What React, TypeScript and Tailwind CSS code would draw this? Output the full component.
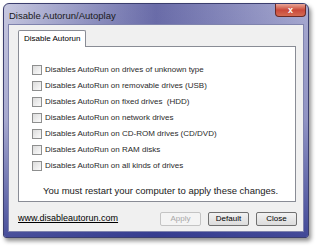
import React from 'react';

const options = [
  'Disables AutoRun on drives of unknown type',
  'Disables AutoRun on removable drives (USB)',
  'Disables AutoRun on fixed drives  (HDD)',
  'Disables AutoRun on network drives',
  'Disables AutoRun on CD-ROM drives (CD/DVD)',
  'Disables AutoRun on RAM disks',
  'Disables AutoRun on all kinds of drives',
];

function CheckBox() {
  return (
    <span className="w-[10px] h-[10px] border border-[#8e8f8f] bg-gradient-to-br from-[#dcdcdc] to-[#fbfbfb] shrink-0" />
  );
}

function Button({ label, disabled }: { label: string; disabled?: boolean }) {
  return (
    <div
      className={
        disabled
          ? 'w-[41px] h-[14px] rounded-[2px] border border-[#c4c4c4] bg-[#f4f4f4] text-[#a8a8a8] flex items-center justify-center text-[8px]'
          : 'w-[41px] h-[14px] rounded-[2px] border border-[#707070] bg-gradient-to-b from-[#f2f2f2] to-[#dcdcdc] text-black flex items-center justify-center text-[8px]'
      }
    >
      {label}
    </div>
  );
}

export default function App() {
  return (
    <div
      className="w-[320px] h-[246px] bg-white pt-[3px] pl-[3px] overflow-hidden"
      style={{ fontFamily: '"Liberation Sans", Arial, sans-serif' }}
    >
      <div className="w-[306px] h-[235px] rounded-t-[6px] rounded-b-[3px] border border-[#3b3e6e] bg-gradient-to-r from-[#c8c9e0] via-[#6a6ca8] to-[#a8aad0] shadow-[2px_3px_4px_rgba(0,0,0,0.45)] overflow-hidden">
        <div className="w-full h-full bg-gradient-to-b from-transparent via-[#5a5fa8]/30 to-[#283089]/80 flex flex-col">
          <div className="h-[20px] flex items-start justify-between pl-[5px] pr-[2px]">
            <span className="text-[9.5px] text-[#1a1a1a] mt-[5px]">Disable Autorun/Autoplay</span>
            <div className="w-[31px] h-[13px] rounded-b-[4px] border border-t-0 border-[#6b2a25] bg-gradient-to-b from-[#e8a597] via-[#c9483a] to-[#d46a52] flex items-center justify-center">
              <span className="text-white text-[9px] font-bold leading-none">x</span>
            </div>
          </div>
          <div className="mx-[4px] h-[208px] bg-[#f0f0f0] border border-[#7f83ad] flex flex-col px-[9px] pt-[5px]">
            <div className="flex">
              <div className="h-[17px] px-[5px] bg-white border border-b-0 border-[#898c95] rounded-t-[2px] flex items-center text-[8px] text-black relative z-10 -mb-px">
                Disable Autorun
              </div>
            </div>
            <div className="w-[278px] h-[156px] bg-white border border-[#898c95] flex flex-col pl-[13px] pt-[15px]">
              {options.map((o) => (
                <div key={o} className="h-[16px] flex items-center gap-[3px]">
                  <CheckBox />
                  <span className="text-[8px] text-[#2a2a2a] whitespace-pre">{o}</span>
                </div>
              ))}
              <div className="mt-[10px] pl-[11px] text-[9.5px] text-[#1a1a1a]">
                You must restart your computer to apply these changes.
              </div>
            </div>
            <div className="flex items-center justify-between mt-[10px]">
              <span className="text-[9px] text-black underline">www.disableautorun.com</span>
              <div className="flex gap-[7px] mr-[-3px]">
                <Button label="Apply" disabled />
                <Button label="Default" />
                <Button label="Close" />
              </div>
            </div>
          </div>
        </div>
      </div>
    </div>
  );
}
